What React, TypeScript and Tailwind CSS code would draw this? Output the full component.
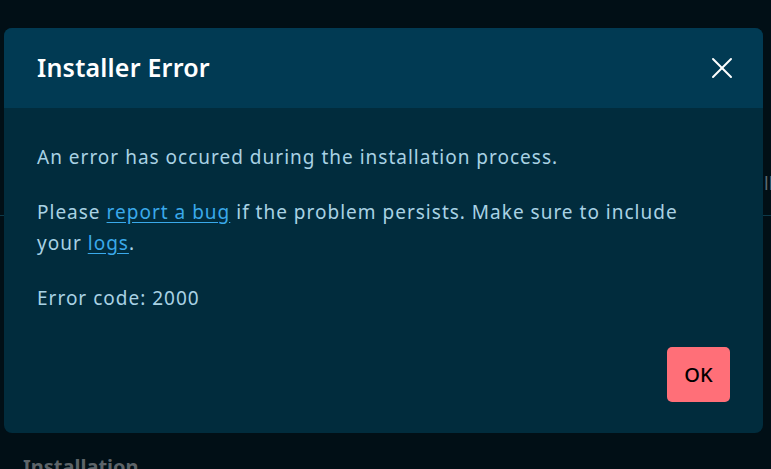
import { X } from 'lucide-react';

const font = { fontFamily: '"Noto Sans", Roboto, sans-serif' };

export default function App() {
  return (
    <div className="relative w-[771px] h-[469px] overflow-hidden bg-[#010f16]" style={font}>
      {/* Page behind the dialog */}
      <div className="flex flex-col h-full">
        <div className="h-[170px]" />
        <div className="flex h-[46px] border-b border-[#0d3a4a]">
          <span className="pl-[764px] text-[18px] text-[#5a6b73] whitespace-nowrap">llation path</span>
        </div>
        <div className="flex-1" />
        <h2 className="px-[23px] text-[20px] font-bold text-[#5d6469] leading-none translate-y-[8px]">
          Installation
        </h2>
      </div>

      {/* Dialog */}
      <div className="absolute left-[4px] top-[28px] w-[759px] h-[405px] rounded-[8px] overflow-hidden bg-[#012c3d] flex flex-col">
        <div className="h-[80px] bg-[#013a53] flex items-center justify-between pl-[33px] pr-[23px]">
          <h1 className="text-[25px] font-semibold text-white tracking-[0.2px]">Installer Error</h1>
          <button aria-label="Close" className="text-white">
            <X className="w-[36px] h-[36px]" strokeWidth={1.3} />
          </button>
        </div>

        <div className="flex-1 flex flex-col px-[33px] pt-[34px] pb-[31px] text-[19px] leading-[31px] tracking-[1px] text-[#a9d2e4]">
          <div className="flex flex-col gap-[24px]">
            <p>An error has occured during the installation process.</p>
            <p className="max-w-[660px]">
              Please{' '}
              <a href="#" className="text-[#3aa9ea] underline underline-offset-[3px]">
                report a bug
              </a>{' '}
              if the problem persists. Make sure to include your{' '}
              <a href="#" className="text-[#3aa9ea] underline underline-offset-[3px]">
                logs
              </a>
              .
            </p>
            <p>Error code: 2000</p>
          </div>
          <div className="flex-1" />
          <div className="flex justify-end">
            <button className="w-[63px] h-[55px] rounded-[5px] bg-[#ff6f78] text-black text-[20px] font-medium tracking-normal">
              OK
            </button>
          </div>
        </div>
      </div>
    </div>
  );
}
